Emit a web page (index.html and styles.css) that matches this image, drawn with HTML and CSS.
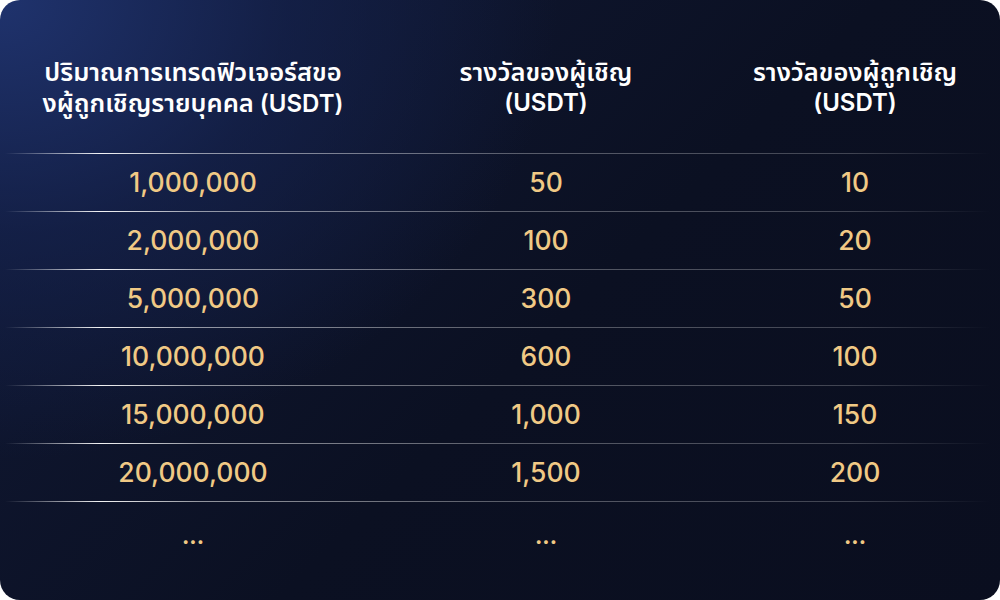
FILE: index.html
```html
<!DOCTYPE html>
<html lang="th">
<head>
<meta charset="utf-8">
<link rel="stylesheet" href="styles.css">
</head>
<body>
<div class="card">
  <div class="table">
    <div class="row head">
      <div class="cell"><span class="th">ปริมาณการเทรดฟิวเจอร์สขอ</span><br><span class="th">งผู้ถูกเชิญรายบุคคล</span> (USDT)</div>
      <div class="cell"><span class="th">รางวัลของผู้เชิญ</span><br>(USDT)</div>
      <div class="cell"><span class="th">รางวัลของผู้ถูกเชิญ</span><br>(USDT)</div>
    </div>
    <div class="row"><div class="cell">1,000,000</div><div class="cell">50</div><div class="cell">10</div></div>
    <div class="row"><div class="cell">2,000,000</div><div class="cell">100</div><div class="cell">20</div></div>
    <div class="row"><div class="cell">5,000,000</div><div class="cell">300</div><div class="cell">50</div></div>
    <div class="row"><div class="cell">10,000,000</div><div class="cell">600</div><div class="cell">100</div></div>
    <div class="row"><div class="cell">15,000,000</div><div class="cell">1,000</div><div class="cell">150</div></div>
    <div class="row"><div class="cell">20,000,000</div><div class="cell">1,500</div><div class="cell">200</div></div>
    <div class="row last"><div class="cell">...</div><div class="cell">...</div><div class="cell">...</div></div>
  </div>
</div>
</body>
</html>
```
FILE: styles.css
```css
html, body {
  margin: 0;
  padding: 0;
  background: #ffffff;
}
.card {
  width: 1000px;
  height: 600px;
  border-radius: 20px;
  overflow: hidden;
  background:
    radial-gradient(ellipse 680px 560px at 0 0, rgba(32, 52, 112, 0.95) 0%, rgba(22, 36, 82, 0.62) 42%, rgba(12, 18, 40, 0) 82%),
    linear-gradient(135deg, #111a38 0%, #0b1022 55%, #0a0e1f 100%);
  font-family: Inter, "Noto Sans", "Noto Sans Thai", sans-serif;
}
.table {
  display: flex;
  flex-direction: column;
}
.row {
  display: grid;
  grid-template-columns: 386px 320px 298px;
  height: 58px;
  align-items: center;
  position: relative;
}
.row::before {
  content: "";
  position: absolute;
  left: 0;
  width: 1000px;
  top: 0;
  height: 1px;
  background: linear-gradient(90deg, rgba(255,255,255,0) 0.5%, rgba(255,255,255,0.35) 4%, rgba(255,255,255,0.95) 10%, rgba(255,255,255,0.55) 20%, rgba(255,255,255,0.32) 50%, rgba(255,255,255,0.22) 85%, rgba(255,255,255,0) 99%);
}
.row.head {
  height: 153px;
  align-items: start;
  box-sizing: border-box;
  padding-top: 57px;
}
.row.head::before {
  display: none;
}
.row.last {
  height: 80px;
}
.cell {
  text-align: center;
  color: #f0c985;
  font-size: 26.5px;
  font-weight: 500;
  line-height: 30px;
}
.head .cell {
  color: #ffffff;
  font-size: 24px;
  font-weight: 600;
  line-height: 30px;
}
.head .th {
  font-size: 25.5px;
}
.last .cell {
  font-size: 22px;
  font-weight: 700;
  padding-bottom: 10px;
}
```
